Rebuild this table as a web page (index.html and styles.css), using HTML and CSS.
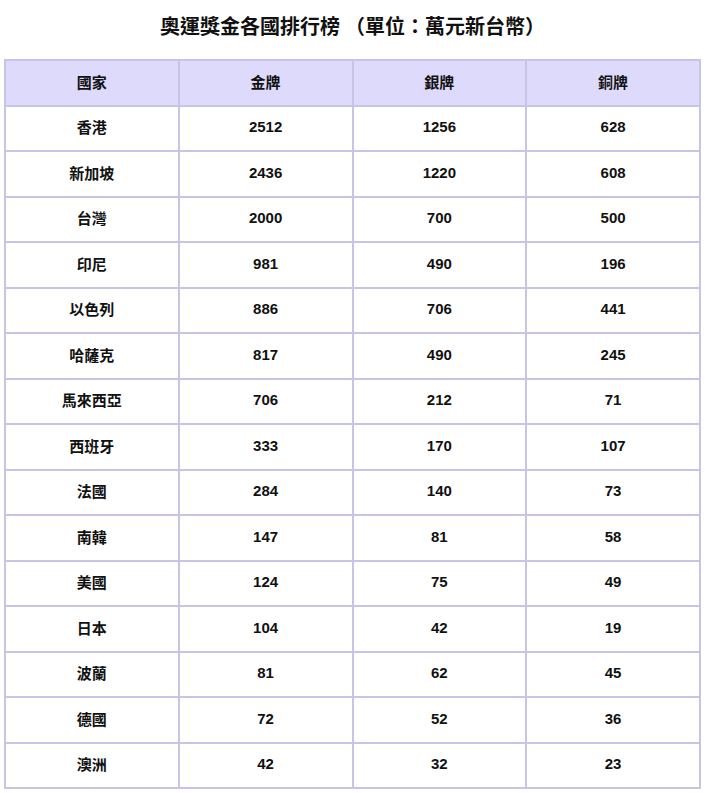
FILE: index.html
```html
<!DOCTYPE html>
<html lang="zh-Hant">
<head>
<meta charset="utf-8">
<title>奧運獎金各國排行榜</title>
<link rel="stylesheet" href="styles.css">
</head>
<body>
<h1 class="title">奧運獎金各國排行榜<span class="punct open">（</span>單位<span class="punct">：</span>萬元新台幣<span class="punct">）</span></h1>
<table class="rank">
<thead>
<tr><th>國家</th><th>金牌</th><th>銀牌</th><th>銅牌</th></tr>
</thead>
<tbody>
<tr><td>香港</td><td>2512</td><td>1256</td><td>628</td></tr>
<tr><td>新加坡</td><td>2436</td><td>1220</td><td>608</td></tr>
<tr><td>台灣</td><td>2000</td><td>700</td><td>500</td></tr>
<tr><td>印尼</td><td>981</td><td>490</td><td>196</td></tr>
<tr><td>以色列</td><td>886</td><td>706</td><td>441</td></tr>
<tr><td>哈薩克</td><td>817</td><td>490</td><td>245</td></tr>
<tr><td>馬來西亞</td><td>706</td><td>212</td><td>71</td></tr>
<tr><td>西班牙</td><td>333</td><td>170</td><td>107</td></tr>
<tr><td>法國</td><td>284</td><td>140</td><td>73</td></tr>
<tr><td>南韓</td><td>147</td><td>81</td><td>58</td></tr>
<tr><td>美國</td><td>124</td><td>75</td><td>49</td></tr>
<tr><td>日本</td><td>104</td><td>42</td><td>19</td></tr>
<tr><td>波蘭</td><td>81</td><td>62</td><td>45</td></tr>
<tr><td>德國</td><td>72</td><td>52</td><td>36</td></tr>
<tr><td>澳洲</td><td>42</td><td>32</td><td>23</td></tr>
</tbody>
</table>
</body>
</html>
```
FILE: styles.css
```css
html, body {
  margin: 0;
  padding: 0;
  background: #ffffff;
}
body {
  padding-top: 12px;
  font-family: "Liberation Sans", "Noto Sans CJK TC", Arial, sans-serif;
  color: #111111;
}
.title {
  margin: 0 0 18px 0;
  font-size: 20px;
  line-height: 28px;
  font-weight: bold;
  text-align: center;
}
.punct {
  font-family: "Noto Sans CJK SC", sans-serif;
}
.punct.open {
  padding-left: 5px;
}
.rank {
  width: 697px;
  margin: 0 auto;
  border-collapse: collapse;
  table-layout: fixed;
  border: 2px solid #c8c4e8;
}
.rank th,
.rank td {
  border: 2px solid #c8c4e8;
  height: 45.5px;
  padding: 0 0 3px 0;
  text-align: center;
  vertical-align: middle;
  font-size: 15px;
  font-weight: bold;
  box-sizing: border-box;
}
.rank th {
  background: #dddafc;
}
```
